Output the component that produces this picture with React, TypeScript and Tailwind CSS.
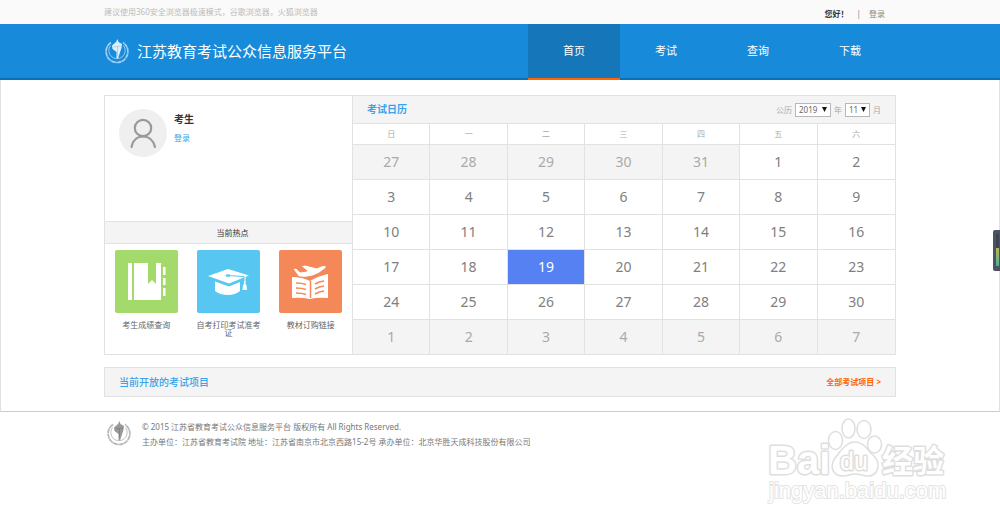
import { clsx } from 'clsx';

const navItems = ['首页', '考试', '查询', '下载'];
const weekDays = ['日', '一', '二', '三', '四', '五', '六'];

// November 2019, padded with the days of the neighbouring months
const weeks = [
  [27, 28, 29, 30, 31, 1, 2],
  [3, 4, 5, 6, 7, 8, 9],
  [10, 11, 12, 13, 14, 15, 16],
  [17, 18, 19, 20, 21, 22, 23],
  [24, 25, 26, 27, 28, 29, 30],
  [1, 2, 3, 4, 5, 6, 7],
];
const today = 19;

const isOutside = (week: number, day: number) => (week === 0 && day > 20) || week === 5;

const Emblem = ({ className }: { className: string }) => (
  <svg viewBox="0 0 26 28" className={className} fill="none" stroke="currentColor" aria-hidden="true">
    <path d="M7 5.500A10.900 10.900 0 1 0 19 5.500" strokeWidth="1.700" strokeDasharray="5 0.400" opacity="0.700" />
    <path d="M6.500 8.500A8.200 8.200 0 1 0 19.500 8.500" strokeWidth="1" opacity="0.600" />
    <path d="M8 8.500L12 5L13.500 2L14.500 5L18 7L17.500 11L14 21.500L12.500 21L12.500 15L8.500 12Z" fill="currentColor" stroke="none" />
    <path d="M9.500 10L17 9M13.500 10V19" strokeWidth="0.600" className="stroke-black/25" />
  </svg>
);

const BookIcon = () => (
  <svg viewBox="0 0 63 63" className="size-full" fill="#fff" aria-hidden="true">
    <path d="M13 13h4v37h-4zM19 13h14v21l4-4l4 4V13h5v37H19z" />
    <path d="M48 17h2.500v8H48zM48 28h2.500v7H48zM48 38h2.500v8H48z" />
  </svg>
);

const CapIcon = () => (
  <svg viewBox="0 0 63 63" className="size-full" fill="#fff" aria-hidden="true">
    <path d="M11 26L31 19L52 25.500L32 33.500Z" />
    <path d="M18 31.500L32 36.500L43 32V41Q38 45 31 45Q23 45 18 41Z" />
    <path d="M47 27h1.500v7h-1.500zM46 35q2-2 3.500 0l0.500 5h-4.500z" />
    <path d="M30 25.500L47 26.500V31" fill="none" stroke="#57c7f1" strokeWidth="1" />
    <ellipse cx="31" cy="25.500" rx="2.500" ry="1.200" fill="#57c7f1" />
  </svg>
);

const TextbookIcon = () => (
  <svg viewBox="0 0 63 63" className="size-full" aria-hidden="true">
    <path d="M13 27q10 0 18 4q8-5 18-7v24q-11-1-18 1q-9-2-18-1z" fill="#fff" />
    <path d="M14 19l3-1l4 4l7-1l-6-5l4-1l12 3q5-3 8-2.500q3 1-1 4Q34 29 20 27z" fill="#fff" stroke="#f58859" strokeWidth="1" />
    <path d="M31.500 31v17M17 33q6 0 10 1.500M17 38q6 0 10 1.500M17 43q6 0 10 1.500M36 34q4-2.500 9-3M36 39q4-2.500 9-3M36 44q4-2.500 9-3" fill="none" stroke="#f58859" strokeWidth="1.500" />
  </svg>
);

const hotLinks = [
  { label: '考生成绩查询', color: 'bg-[#a4d96c]', icon: <BookIcon /> },
  { label: '自考打印考试准考证', color: 'bg-[#57c7f1]', icon: <CapIcon /> },
  { label: '教材订购链接', color: 'bg-[#f58859]', icon: <TextbookIcon /> },
];

const DateSelect = ({ label, value, width }: { label: string; value: string; width: string }) => (
  <span className={clsx('relative', width)}>
    <select aria-label={label} defaultValue={value} className="block h-[14px] w-full appearance-none border border-[#b8b8b8] bg-white pl-[3px] text-[8px] leading-3 text-[#666]">
      <option>{value}</option>
    </select>
    <svg viewBox="0 0 5 5" className="pointer-events-none absolute top-1 right-1 size-[5px]" aria-hidden="true">
      <path d="M0 0h5L2.500 5z" fill="#111" />
    </svg>
  </span>
);

const Header = () => (
  <header>
    <div className="bg-[#fafafa]">
      <div className="mx-auto flex h-6 w-full max-w-[792px] items-center justify-between text-[8px]">
        <p className="text-[#bbb]">建议使用360安全浏览器极速模式，谷歌浏览器，火狐浏览器</p>
        <p className="flex items-center gap-2 pt-[3px] pr-[11px] text-[#888]">
          <strong className="text-[#333]">您好！</strong>
          <span>|</span>
          <a href="#login">登录</a>
        </p>
      </div>
    </div>
    <div className="border-b-2 border-[#0c70b9] bg-[#178bda]">
      <div className="mx-auto flex h-[54px] w-full max-w-[792px] justify-between text-white">
        <div className="flex items-center gap-[7px]">
          <Emblem className="h-7 w-[26px] text-[#dcf0ff]" />
          <h1 className="text-[15px]">江苏教育考试公众信息服务平台</h1>
        </div>
        <nav className="-mb-[2px] flex text-[11px]">
          {navItems.map((item, i) => (
            <a key={item} href="#nav" className={clsx('flex w-[92px] items-center justify-center border-b-2', i === 0 ? 'border-[#f60] bg-[#1576b9]' : 'border-transparent')}>
              {item}
            </a>
          ))}
        </nav>
      </div>
    </div>
  </header>
);

const UserPanel = () => (
  <aside className="flex w-[249px] shrink-0 flex-col border border-[#e2e2e2]">
    <div className="flex h-[125px] gap-[7px] px-[14px] pt-[13px]">
      <span className="size-12 rounded-full bg-[#efefef]">
        <svg viewBox="0 0 48 48" className="size-12" fill="none" stroke="#999" strokeWidth="2.200" strokeLinecap="round" aria-hidden="true">
          <circle cx="24" cy="19" r="8.200" />
          <path d="M12.500 38Q14.500 27.500 24 27.500T36 38" />
        </svg>
      </span>
      <div className="pt-[2px]">
        <p className="text-[10px] leading-4 font-bold text-[#333]">考生</p>
        <a href="#login" className="mt-[3px] block text-[8px] leading-4 text-[#3ba3ea]">登录</a>
      </div>
    </div>
    <h2 className="h-[23px] border-y border-[#e2e2e2] bg-[#f4f4f4] pl-2 text-center text-[8px] leading-[22px] text-[#333]">当前热点</h2>
    <ul className="grid grid-cols-3 pt-[6px]">
      {hotLinks.map((link) => (
        <li key={link.label}>
          <a href="#hot" className="flex flex-col items-center text-center text-[8px] leading-2 text-[#666]">
            <span className={clsx('size-[63px] rounded-xs', link.color)}>{link.icon}</span>
            <span className="mt-2 w-[68px]">{link.label}</span>
          </a>
        </li>
      ))}
    </ul>
  </aside>
);

const Calendar = () => (
  <section className="grow border-t border-r border-[#e2e2e2]">
    <div className="flex h-[27px] items-center justify-between bg-[#f4f4f4] px-[14px]">
      <h2 className="text-[10px] font-bold text-[#3ba3ea]">考试日历</h2>
      <div className="flex items-center gap-[3px] text-[8px] text-[#aaa]">
        <span>公历</span>
        <DateSelect label="年" value="2019" width="w-9" />
        <span>年</span>
        <DateSelect label="月" value="11" width="w-[25px]" />
        <span>月</span>
      </div>
    </div>
    <table className="w-full table-fixed border-separate border-spacing-0 text-center">
      <thead>
        <tr className="h-[22px] text-[8px] leading-4 text-[#aaa]">
          {weekDays.map((day) => (
            <th key={day} className="border-y border-r border-[#e2e2e2] p-0 font-normal last:border-r-0">{day}</th>
          ))}
        </tr>
      </thead>
      <tbody>
        {weeks.map((week, w) => (
          <tr key={w} className="h-[35px] text-[14px] leading-5">
            {week.map((day) => (
              <td
                key={day}
                className={clsx(
                  'border-r border-b border-[#e2e2e2] p-0 last:border-r-0',
                  isOutside(w, day) ? 'bg-[#f4f4f4] text-[#aaa]' : day === today ? 'bg-[#5681f3] text-white' : 'text-[#808080]',
                )}
              >
                {day}
              </td>
            ))}
          </tr>
        ))}
      </tbody>
    </table>
  </section>
);

const Watermark = () => (
  <svg viewBox="0 0 184 92" className="pointer-events-none absolute right-[50px] bottom-[18px] h-[92px] w-[184px] font-['Liberation_Sans','Noto_Sans_CJK_SC',sans-serif]" fill="#fff" stroke="#dedede" strokeWidth="1.500" strokeLinejoin="round" aria-hidden="true">
    <text x="2" y="58" fontSize="40" fontWeight="700" strokeWidth="3" paintOrder="stroke">Bai</text>
    <ellipse cx="69.500" cy="24.500" rx="7" ry="9" />
    <ellipse cx="82.500" cy="12.500" rx="6.500" ry="9.500" />
    <ellipse cx="98" cy="13.500" rx="7" ry="9" />
    <ellipse cx="108.500" cy="28.500" rx="7" ry="8.500" />
    <path d="M89 26C98 26 101 34 108 40C116 49 111 60 102 60C97 60 94 58 89 58C84 58 82 60 77 60C67 60 63 51 69 42C74 36 80 26 89 26Z" />
    <text x="74" y="54" fontSize="25" strokeWidth="3" paintOrder="stroke">du</text>
    <text x="116" y="56" fontSize="31" fontWeight="700" strokeWidth="3" paintOrder="stroke">经验</text>
    <text x="3" y="82" fontSize="22" strokeWidth="2" paintOrder="stroke" stroke="#e4e4e4">jingyan.baidu.com</text>
  </svg>
);

const App = () => {
  return (
    <div className="relative min-h-screen overflow-hidden bg-white font-['Noto_Sans','Noto_Sans_CJK_SC',sans-serif]">
      <Header />

      <main className="border-x border-b border-x-[#e2e2e2] border-b-[#ccc] pt-[15px] pb-[14px]">
        <div className="mx-auto w-full max-w-[792px]">
          <div className="flex">
            <UserPanel />
            <Calendar />
          </div>
          <div className="mt-3 flex h-[30px] items-center justify-between border border-[#e2e2e2] bg-[#f4f4f4] px-[14px]">
            <h2 className="text-[10px] font-medium text-[#3ba3ea]">当前开放的考试项目</h2>
            <a href="#projects" className="text-[8px] font-bold text-[#f60]">全部考试项目 &gt;</a>
          </div>
        </div>
      </main>

      <footer className="mx-auto flex w-full max-w-[792px] items-start gap-[10px] pt-[7px] pl-[2px] text-[8px] leading-[15px] text-[#777]">
        <Emblem className="h-7 w-[26px] text-[#999]" />
        <div>
          <p>© 2015 江苏省教育考试公众信息服务平台 版权所有 All Rights Reserved.</p>
          <p>主办单位：江苏省教育考试院 地址：江苏省南京市北京西路15-2号 承办单位：北京华胜天成科技股份有限公司</p>
        </div>
      </footer>

      <Watermark />

      {/* system gauge docked to the window edge */}
      <div className="absolute top-[230px] right-0 h-[41px] w-[7px] rounded-l-xs bg-[#4b5262] py-1 pl-[3px]">
        <div className="h-[14px] w-[3px] bg-[#3d4454]" />
        <div className="h-[18px] w-[3px] bg-linear-to-b from-[#b5b84a] to-[#3fae9a]" />
      </div>
    </div>
  );
};

export default App;
